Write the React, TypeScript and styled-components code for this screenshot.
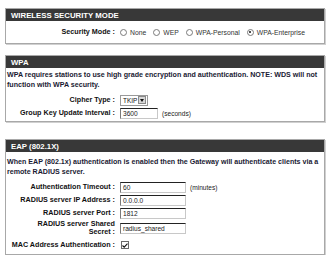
import React from "react";
import styled, {createGlobalStyle} from "styled-components";

const GlobalStyle = createGlobalStyle`
  html, body {
    margin: 0;
    padding: 0;
    background: #FFFFFF;
  }
  body {
    font-family: "Liberation Sans", Arial, sans-serif;
    color: #111111;
  }
`;

const Page = styled.div`
  display: flex;
  flex-direction: column;
  width: 320px;
  padding: 8px 5px 0;
`;

const Box = styled.section<{ gap?: number }>`
  display: flex;
  flex-direction: column;
  margin-bottom: ${props => props.gap ?? 0}px;

  background: #FFFFFF;
  border: 1px solid #A8A8A8;
  box-shadow: 1px 1px 0 #D0D0D0;
`;

const Header = styled.div`
  display: flex;
  align-items: center;
  height: 12px;
  padding: 0 5px;

  background: #383838;
  color: #FFFFFF;
  font-weight: 700;
  font-size: 7.8px;
`;

const Body = styled.div<{ pt?: number; pb?: number }>`
  display: flex;
  flex-direction: column;
  padding: ${props => props.pt ?? 2}px 2px ${props => props.pb ?? 2}px 1px;
`;

const Note = styled.p`
  margin: 0 0 4px;
  font-weight: 700;
  font-size: 7.1px;
  line-height: 10px;
  color: #1A1A33;
`;

const Form = styled.div`
  display: grid;
  grid-template-columns: 108px 1fr;
  column-gap: 5px;
  row-gap: 1px;
  align-items: center;
`;

const Label = styled.div`
  min-height: 12px;
  display: flex;
  flex-direction: column;
  justify-content: center;

  font-weight: 700;
  font-size: 7.2px;
  line-height: 8px;
  text-align: right;
  white-space: nowrap;
`;

const Control = styled.div`
  display: flex;
  align-items: center;
  gap: 4px;
  min-height: 12px;
  font-size: 6.4px;
`;

const Input = styled.div<{ w: number }>`
  display: flex;
  align-items: center;
  box-sizing: border-box;
  width: ${props => props.w}px;
  height: 11px;
  padding: 0 2px;

  border: 1px solid #C8C8C8;
  border-top-color: #222222;
  border-left-color: #7A7A7A;
  font-size: 6.6px;
  color: #222222;
`;

const Unit = styled.span`
  font-size: 6.6px;
  color: #222222;
`;

const Select = styled.div`
  display: flex;
  align-items: center;
  box-sizing: border-box;
  width: 28px;
  height: 11px;
  padding-left: 2px;

  border: 1px solid #9A9A9A;
  font-size: 6.4px;
`;

const SelectText = styled.span`
  flex: 1;
`;

const SelectButton = styled.span`
  display: flex;
  align-items: center;
  justify-content: center;
  width: 8px;
  height: 8px;
  margin-right: 1px;

  background: #D8D8D8;
  border: 1px solid #8A8A8A;
  box-sizing: border-box;
`;

const Radios = styled.div`
  display: flex;
  align-items: center;
  gap: 7px;
  min-height: 22px;
`;

const RadioItem = styled.label`
  display: flex;
  align-items: center;
  gap: 3px;
  font-size: 6.8px;
  color: #333333;
`;

const RadioDot = styled.span<{ checked?: boolean }>`
  position: relative;
  display: inline-block;
  width: 7px;
  height: 7px;
  box-sizing: border-box;

  border: 1px solid #7A7A7A;
  border-radius: 50%;
  background: #FFFFFF;

  ${props => props.checked && `
    &::after {
      content: "";
      position: absolute;
      top: 1.5px;
      left: 1.5px;
      width: 2px;
      height: 2px;
      border-radius: 50%;
      background: #111111;
    }
  `}
`;

const Check = styled.span`
  display: flex;
  align-items: center;
  justify-content: center;
  box-sizing: border-box;
  width: 8px;
  height: 8px;
  margin-left: 1px;

  border: 1px solid #6A6A6A;
  background: #FFFFFF;
`;

const MacLabel = styled(Label)`
  margin-top: 2px;
`;

const MacControl = styled(Control)`
  margin-top: 2px;
`;

const Radio: React.FC<{ label: string; checked?: boolean }> = ({label, checked}) => (
  <RadioItem>
    <RadioDot checked={checked}/>
    {label}
  </RadioItem>
);

const App: React.FC = () => {
  return (
    <>
      <GlobalStyle/>
      <Page>
        <Box gap={11}>
          <Header>WIRELESS SECURITY MODE</Header>
          <Body pt={0} pb={0}>
            <Form>
              <Label>Security Mode :</Label>
              <Radios>
                <Radio label="None"/>
                <Radio label="WEP"/>
                <Radio label="WPA-Personal"/>
                <Radio label="WPA-Enterprise" checked/>
              </Radios>
            </Form>
          </Body>
        </Box>

        <Box gap={17}>
          <Header>WPA</Header>
          <Body pt={2}>
            <Note>
              WPA requires stations to use high grade encryption and authentication. NOTE: WDS will not
              function with WPA security.
            </Note>
            <Form>
              <Label>Cipher Type :</Label>
              <Control>
                <Select>
                  <SelectText>TKIP</SelectText>
                  <SelectButton>
                    <svg width="4" height="3" viewBox="0 0 4 3">
                      <path d="M0 0 L4 0 L2 3 Z" fill="#111111"/>
                    </svg>
                  </SelectButton>
                </Select>
              </Control>
              <Label>Group Key Update Interval :</Label>
              <Control>
                <Input w={38}>3600</Input>
                <Unit>(seconds)</Unit>
              </Control>
            </Form>
          </Body>
        </Box>

        <Box>
          <Header>EAP (802.1X)</Header>
          <Body pt={5} pb={3}>
            <Note>
              When EAP (802.1x) authentication is enabled then the Gateway will authenticate clients via a
              remote RADIUS server.
            </Note>
            <Form>
              <Label>Authentication Timeout :</Label>
              <Control>
                <Input w={66}>60</Input>
                <Unit>(minutes)</Unit>
              </Control>
              <Label>RADIUS server IP Address :</Label>
              <Control>
                <Input w={66}>0.0.0.0</Input>
              </Control>
              <Label>RADIUS server Port :</Label>
              <Control>
                <Input w={66}>1812</Input>
              </Control>
              <Label>
                <span>RADIUS server Shared</span>
                <span>Secret :</span>
              </Label>
              <Control>
                <Input w={66}>radius_shared</Input>
              </Control>
              <MacLabel>MAC Address Authentication :</MacLabel>
              <MacControl>
                <Check>
                  <svg width="6" height="5" viewBox="0 0 6 5">
                    <path d="M0.5 2.5 L2.2 4.2 L5.5 0.6" stroke="#111111" strokeWidth="1.1" fill="none"/>
                  </svg>
                </Check>
              </MacControl>
            </Form>
          </Body>
        </Box>
      </Page>
    </>
  );
};

export default App;
